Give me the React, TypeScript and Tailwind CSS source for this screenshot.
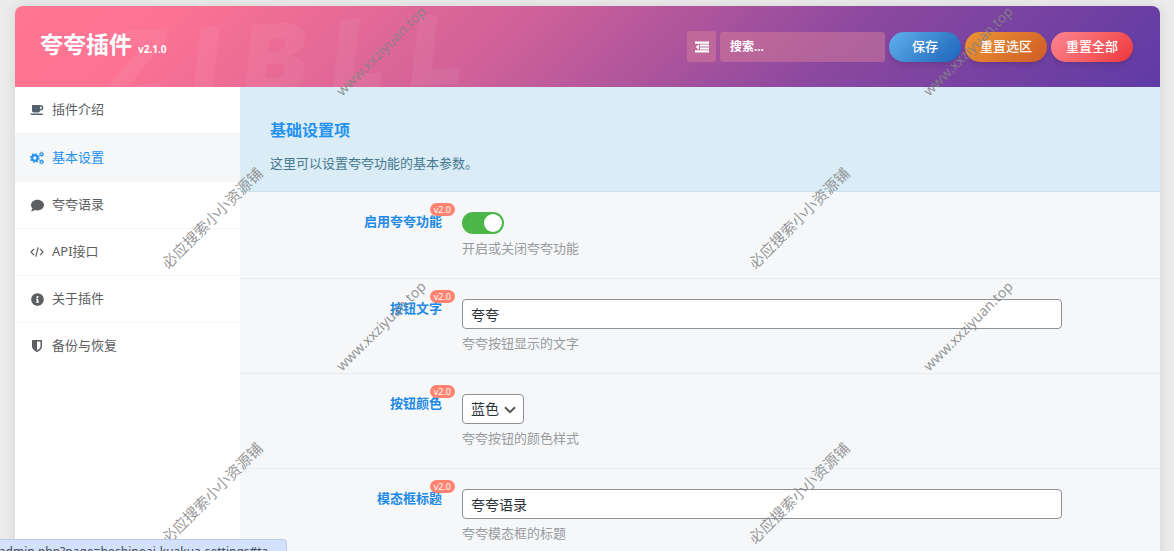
import React from 'react';
import { FaComment, FaInfoCircle } from 'react-icons/fa';

function CodeIcon() {
  return (
    <svg viewBox="0 0 14 14" className="h-3.5 w-3.5" fill="none" stroke="currentColor" strokeWidth="1.2">
      <path d="M4 3.8 1 7l3 3.2M10 3.8 13 7l-3 3.2M8.2 2.4 5.8 11.6" />
    </svg>
  );
}

function CoffeeIcon() {
  return (
    <svg viewBox="0 0 14 14" className="h-3.5 w-3.5" fill="currentColor">
      <path d="M2 2h8.6a2.7 2.7 0 0 1 0 5.4H10v.4A1.7 1.7 0 0 1 8.3 9.5H3.7A1.7 1.7 0 0 1 2 7.800V2Zm8 1.400v2.600h.6a1.300 1.300 0 0 0 0-2.600H10Z" />
      <path d="M.3 10.400h12.800c0 .9-.9 1.600-2 1.600H2.300c-1.100 0-2-.7-2-1.600Z" />
    </svg>
  );
}

function CogsIcon() {
  return (
    <svg viewBox="0 0 14 14" className="h-3.5 w-3.5" fill="none" stroke="currentColor">
      <circle cx="4.8" cy="7" r="2.7" strokeWidth="2" />
      <circle cx="4.8" cy="7" r="4.2" strokeWidth="1.4" strokeDasharray="1.65 1.65" />
      <circle cx="11.5" cy="3.2" r="1.4" strokeWidth="1.1" />
      <circle cx="11.5" cy="3.2" r="2.1" strokeWidth=".8" strokeDasharray="1.1 1.1" />
      <circle cx="11.5" cy="10.8" r="1.4" strokeWidth="1.1" />
      <circle cx="11.5" cy="10.8" r="2.1" strokeWidth=".8" strokeDasharray="1.1 1.1" />
    </svg>
  );
}

function ShieldIcon() {
  return (
    <svg viewBox="0 0 1792 1792" className="h-3.5 w-3.5" fill="currentColor">
      <path d="M1344 960v-640h-448v1137q119-63 213-137 235-184 235-360zm192-768v768q0 86-33.5 170.5t-83 150-118 127.5-126.5 103-121 77.5-89.5 49.5-42.5 20q-12 6-26 6t-26-6q-16-7-42.5-20t-89.5-49.5-121-77.5-126.5-103-118-127.5-83-150-33.5-170.5v-768q0-26 19-45t45-19h1152q26 0 45 19t19 45z" />
    </svg>
  );
}

function OutdentIcon() {
  return (
    <svg viewBox="0 0 14 12" className="h-3 w-3.5" fill="currentColor">
      <path d="M0 .5h14v2.3H0zM5 3.5h9v2.1H5zM5 6.4h9v2.1H5zM0 9.2h14v2.3H0zM4 3.3v5.4L.6 6z" />
    </svg>
  );
}

const navItems = [
  { label: '插件介绍', icon: <span className="text-[#55606e]"><CoffeeIcon /></span> },
  { label: '基本设置', icon: <CogsIcon />, active: true },
  { label: '夸夸语录', icon: <FaComment className="h-[13px] w-[13px]" /> },
  { label: 'API接口', icon: <CodeIcon /> },
  { label: '关于插件', icon: <FaInfoCircle className="h-[13px] w-[13px]" /> },
  { label: '备份与恢复', icon: <ShieldIcon /> },
];

function BrandBackdrop() {
  return (
    <div
      aria-hidden="true"
      className="pointer-events-none absolute top-2 left-[85px] flex -rotate-3 gap-6 font-[Inter,sans-serif] text-[96px] leading-[88px] font-black text-white/5 italic select-none"
    >
      <span>Z</span>
      <span>I</span>
      <span>B</span>
      <span>L</span>
      <span>L</span>
    </div>
  );
}

function Header() {
  return (
    <header className="relative flex h-[81px] items-center justify-between overflow-hidden rounded-t-lg bg-[linear-gradient(135deg,#ff7693_0%,#fb7293_14%,#cf6199_43%,#8b489f_71%,#5f3ba5_100%)] pr-[27px] pl-[25px] text-white">
      <BrandBackdrop />
      <h1 className="relative text-[23px] leading-8 font-bold">
        夸夸插件 <small className="text-[10px]">v2.1.0</small>
      </h1>
      <form className="relative flex items-center gap-1 text-[13px] font-medium" onSubmit={(e) => e.preventDefault()}>
        <button type="button" aria-label="展开全部" className="flex h-[31px] w-[29px] items-center justify-center rounded-[3px] bg-[#d87d98]/50">
          <OutdentIcon />
        </button>
        <input
          type="text"
          aria-label="搜索"
          placeholder="搜索..."
          className="h-[30px] w-[165px] rounded-[3px] bg-[#d87d98]/50 px-2.5 text-xs font-semibold outline-none placeholder:text-white"
        />
        <button type="submit" className="h-[30px] w-[72px] rounded-full bg-linear-135 from-[#61b0ec] to-[#1c63b8] shadow-md">保存</button>
        <button type="button" className="h-[30px] w-[82px] rounded-full bg-linear-135 from-[#eb9532] to-[#cf5b27] shadow-md">重置选区</button>
        <button type="button" className="h-[30px] w-[82px] rounded-full bg-linear-135 from-[#fb8590] to-[#ee3139] shadow-md">重置全部</button>
      </form>
    </header>
  );
}

function Sidebar() {
  return (
    <nav className="w-[225px] shrink-0 bg-white text-[13px]">
      <ul>
        {navItems.map((item) => (
          <li key={item.label} className="border-b border-[#f4f5f6] last:border-b-0">
            <a
              href="#tab"
              className={
                item.active
                  ? 'flex h-[47px] items-center gap-2 bg-[#f5f7f9] px-[15px] text-[#1e90f0]'
                  : 'flex h-[46px] items-center gap-2 px-[15px] text-[#5c5e61]'
              }
            >
              <span className="flex w-3.5 justify-center">{item.icon}</span>
              {item.label}
            </a>
          </li>
        ))}
      </ul>
    </nav>
  );
}

function Field({ id, label, desc, children }: { id: string; label: string; desc: string; children: React.ReactNode }) {
  return (
    <div className="flex gap-5 border-b border-[#e9ebed] py-5 pr-8">
      <div className="w-[202px] shrink-0 text-right text-[13px] leading-[19px] font-bold text-[#1e8ae6]">
        <label htmlFor={id} className="relative inline-block">
          {label}
          <span className="absolute -top-[9px] -right-[13px] rounded-full bg-[#ff8370] px-1 text-[9px] leading-[13px] font-normal text-white">v2.0</span>
        </label>
      </div>
      <div className="min-w-0 flex-1">
        {children}
        <p className="mt-[5px] text-[13px] leading-[19px] text-[#999b9e]">{desc}</p>
      </div>
    </div>
  );
}

function TextInput({ id, value }: { id: string; value: string }) {
  return (
    <input
      id={id}
      type="text"
      defaultValue={value}
      className="block h-[30px] w-full max-w-[600px] rounded-sm border border-[#8c8f94] bg-white px-2 text-sm text-[#2c3338]"
    />
  );
}

function Settings() {
  return (
    <main className="min-w-0 flex-1 bg-[#f5f7f9]">
      <section className="h-[105px] border-b border-[#cbe3ec] bg-[#daecf6] px-[30px] pt-8">
        <h2 className="text-base leading-[22px] font-bold text-[#2492ee]">基础设置项</h2>
        <p className="mt-3 text-[13px] leading-5 text-[#47788e]">这里可以设置夸夸功能的基本参数。</p>
      </section>
      <Field id="enabled" label="启用夸夸功能" desc="开启或关闭夸夸功能">
        <span className="relative block h-[22px] w-[42px]">
          <input id="enabled" type="checkbox" defaultChecked className="peer block h-[22px] w-[42px] appearance-none rounded-full bg-[#adadad] checked:bg-[#4cb748]" />
          <span className="pointer-events-none absolute top-0.5 left-0.5 h-[18px] w-[18px] rounded-full bg-white peer-checked:left-[22px]" />
        </span>
      </Field>
      <Field id="text" label="按钮文字" desc="夸夸按钮显示的文字">
        <TextInput id="text" value="夸夸" />
      </Field>
      <Field id="color" label="按钮颜色" desc="夸夸按钮的颜色样式">
        <span className="relative block h-[30px] w-[62px]">
          <select id="color" defaultValue="blue" className="h-[30px] w-full appearance-none rounded-sm border border-[#8c8f94] bg-white pl-2 text-sm text-[#2c3338]">
            <option value="blue">蓝色</option>
          </select>
          <svg viewBox="0 0 12 8" className="pointer-events-none absolute top-3 right-2 h-2 w-3" fill="none" stroke="#555" strokeWidth="2">
            <path d="m1 1.2 5 5 5-5" />
          </svg>
        </span>
      </Field>
      <Field id="title" label="模态框标题" desc="夸夸模态框的标题">
        <TextInput id="title" value="夸夸语录" />
      </Field>
    </main>
  );
}

function Watermark({ className, text }: { className: string; text: string }) {
  return (
    <span className={`absolute -translate-x-1/2 -translate-y-1/2 -rotate-45 whitespace-nowrap ${className}`}>{text}</span>
  );
}

export default function App() {
  return (
    <div className="relative h-screen overflow-hidden bg-[#ececec] px-[15px] pt-1.5 font-['Noto_Sans','Noto_Sans_CJK_SC',sans-serif]">
      <div className="mr-[-1px] rounded-t-lg pb-5 shadow-[0_0_14px_rgba(0,0,0,0.1)]">
        <Header />
        <div className="flex min-h-screen bg-white">
          <Sidebar />
          <Settings />
        </div>
      </div>
      <div className="pointer-events-none absolute inset-0 text-[#848484]/85">
        <Watermark className="top-[218px] left-[212px] text-[15px]" text="必应搜索小小资源铺" />
        <Watermark className="top-[218px] left-[799px] text-[15px]" text="必应搜索小小资源铺" />
        <Watermark className="top-[493px] left-[212px] text-[15px]" text="必应搜索小小资源铺" />
        <Watermark className="top-[493px] left-[799px] text-[15px]" text="必应搜索小小资源铺" />
        <Watermark className="top-[51px] left-[381px] text-sm" text="www.xxziyuan.top" />
        <Watermark className="top-[51px] left-[968px] text-sm" text="www.xxziyuan.top" />
        <Watermark className="top-[326px] left-[381px] text-sm" text="www.xxziyuan.top" />
        <Watermark className="top-[326px] left-[968px] text-sm" text="www.xxziyuan.top" />
      </div>
      <div className="absolute bottom-0 left-0 flex h-3 w-[287px] justify-end overflow-hidden rounded-tr border-t border-r border-[#bccaea] bg-[#d3e1fc] pr-2 text-xs leading-[23px] whitespace-nowrap text-[#444c58]">
        admin.php?page=hoshinoai-kuakua-settings#ta...
      </div>
    </div>
  );
}
